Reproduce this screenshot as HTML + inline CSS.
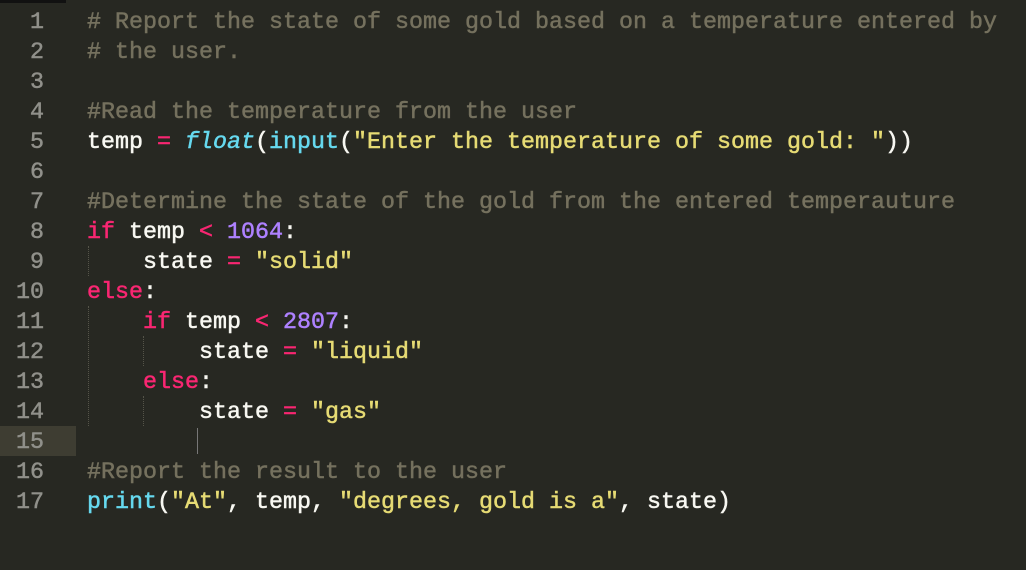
<!DOCTYPE html>
<html><head><meta charset="utf-8"><style>
html,body{margin:0;padding:0;background:#272822;width:1026px;height:570px;overflow:hidden}
body{position:relative;font-family:"Liberation Mono",monospace;font-size:23.33px;-webkit-text-stroke:0.5px currentColor}
.ln{position:absolute;left:0;width:44px;text-align:right;color:#90908a;height:30px;line-height:30px;margin-top:2px}
.l{position:absolute;left:87px;height:30px;line-height:30px;color:#f8f8f2;white-space:pre;margin-top:2px}
.c{color:#75715e}.k{color:#f92672}.f{color:#66d9ef}.s{color:#e6db74}.n{color:#ae81ff}.i{font-style:italic}
.hl{position:absolute;left:0;top:426px;width:76px;height:30px;background:#3e3d32}
.g{position:absolute;width:0;border-left:1px dotted #555449}
.tab{position:absolute;left:0;top:0;width:66px;height:3px;background:#111}
</style></head><body>
<div class="tab"></div>
<div class="hl"></div>
<div class="g" style="left:88px;top:246px;height:30px"></div>
<div class="g" style="left:88px;top:306px;height:120px"></div>
<div class="g" style="left:143px;top:336px;height:30px"></div>
<div class="g" style="left:143px;top:396px;height:30px"></div>
<div style="position:absolute;left:197px;top:428px;width:1px;height:26px;background:#777"></div>
<div class="ln" style="top:6px">1</div><div class="ln" style="top:36px">2</div><div class="ln" style="top:66px">3</div><div class="ln" style="top:96px">4</div><div class="ln" style="top:126px">5</div><div class="ln" style="top:156px">6</div><div class="ln" style="top:186px">7</div><div class="ln" style="top:216px">8</div><div class="ln" style="top:246px">9</div><div class="ln" style="top:276px">10</div><div class="ln" style="top:306px">11</div><div class="ln" style="top:336px">12</div><div class="ln" style="top:366px">13</div><div class="ln" style="top:396px">14</div><div class="ln" style="top:426px">15</div><div class="ln" style="top:456px">16</div><div class="ln" style="top:486px">17</div>
<div class="l c" style="top:6px"># Report the state of some gold based on a temperature entered by</div>
<div class="l c" style="top:36px"># the user.</div>
<div class="l c" style="top:96px">#Read the temperature from the user</div>
<div class="l" style="top:126px">temp <span class="k">=</span> <span class="f i">float</span>(<span class="f">input</span>(<span class="s">"Enter the temperature of some gold: "</span>))</div>
<div class="l c" style="top:186px">#Determine the state of the gold from the entered temperauture</div>
<div class="l" style="top:216px"><span class="k">if</span> temp <span class="k">&lt;</span> <span class="n">1064</span>:</div>
<div class="l" style="top:246px">    state <span class="k">=</span> <span class="s">"solid"</span></div>
<div class="l" style="top:276px"><span class="k">else</span>:</div>
<div class="l" style="top:306px">    <span class="k">if</span> temp <span class="k">&lt;</span> <span class="n">2807</span>:</div>
<div class="l" style="top:336px">        state <span class="k">=</span> <span class="s">"liquid"</span></div>
<div class="l" style="top:366px">    <span class="k">else</span>:</div>
<div class="l" style="top:396px">        state <span class="k">=</span> <span class="s">"gas"</span></div>
<div class="l c" style="top:456px">#Report the result to the user</div>
<div class="l" style="top:486px"><span class="f">print</span>(<span class="s">"At"</span>, temp, <span class="s">"degrees, gold is a"</span>, state)</div>
</body></html>
